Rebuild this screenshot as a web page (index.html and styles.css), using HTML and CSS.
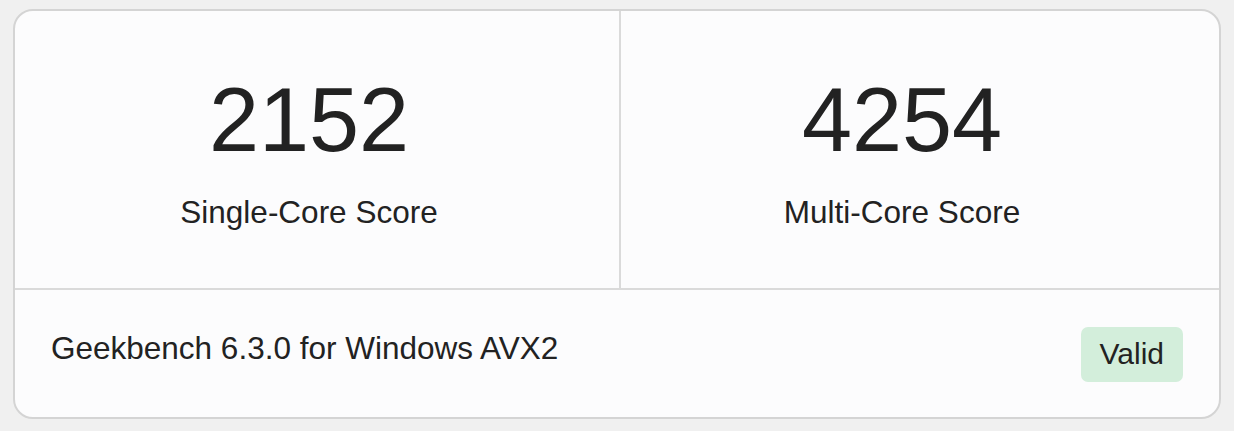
FILE: index.html
```html
<!DOCTYPE html>
<html lang="en">
  <head>
    <meta charset="UTF-8" />
    <meta name="viewport" content="width=device-width, initial-scale=1.0" />
    <title>Geekbench Result</title>
    <link rel="stylesheet" href="styles.css">
  </head>
  <body>
    <div class="card">
      <div class="scores">
        <div class="score score-single">
          <div class="score-value">2152</div>
          <div class="score-name">Single-Core Score</div>
        </div>
        <div class="score score-multi">
          <div class="score-value">4254</div>
          <div class="score-name">Multi-Core Score</div>
        </div>
      </div>
      <div class="card-footer">
        <div class="version">Geekbench 6.3.0 for Windows AVX2</div>
        <span class="badge">Valid</span>
      </div>
    </div>
  </body>
</html>
```

FILE: styles.css
```css
body {
  font-family: "Liberation Sans", Arial, sans-serif;
  background-color: #f0f0f0;
  color: #222;
  margin: 0;
  padding: 9px 0 0 13px;
}
.card {
  width: 1204px;
  height: 406px;
  background-color: #fcfcfd;
  border: 2px solid #d4d4d4;
  border-radius: 20px;
  overflow: hidden;
  display: flex;
  flex-direction: column;
}
.scores {
  display: grid;
  grid-template-columns: 606px 1fr;
  height: 277px;
  border-bottom: 2px solid #dadada;
}
.score {
  text-align: center;
  padding-top: 64px;
}
.score-single {
  border-right: 2px solid #dadada;
  padding-right: 16px;
}
.score-multi {
  padding-right: 36px;
}
.score-value {
  font-size: 90px;
  line-height: 1;
}
.score-name {
  font-size: 31.5px;
  line-height: 1;
  margin-top: 32px;
}
.card-footer {
  flex: 1;
  display: flex;
  align-items: center;
  justify-content: space-between;
  padding: 0 36px;
}
.version {
  font-size: 31.5px;
  line-height: 1;
  padding-bottom: 10px;
}
.badge {
  font-size: 30px;
  line-height: 1;
  padding: 12px 19px 13px;
  background-color: #d3eedb;
  border-radius: 7px;
  margin-top: 2px;
}
```
